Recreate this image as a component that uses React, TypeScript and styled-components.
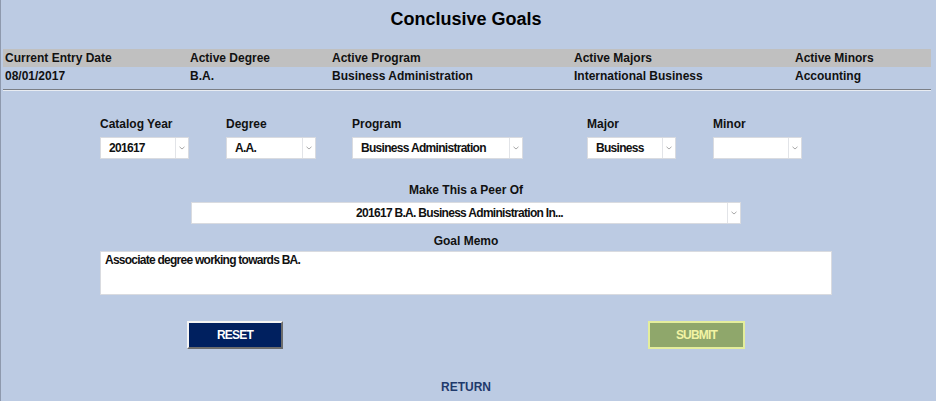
import React from "react";
import styled, { createGlobalStyle } from "styled-components";

const GlobalStyle = createGlobalStyle`
  html, body {
    margin: 0;
    padding: 0;
    background: #bccbe3;
  }
`;

interface SelectProps {
  value?: string;
  width: number;
  centered?: boolean;
}

const Select = ({ value, width, centered }: SelectProps) => (
  <SelectBox $width={width}>
    <SelectValue $centered={centered}>{value}</SelectValue>
    <ArrowCell>
      <svg width="6" height="4" viewBox="0 0 6 4">
        <path d="M0.5 0.8 L3 3 L5.5 0.8" fill="none" stroke="#a8a8a8" strokeWidth="1" />
      </svg>
    </ArrowCell>
  </SelectBox>
);

const fields = [
  { label: "Catalog Year", value: "201617", width: 89 },
  { label: "Degree", value: "A.A.", width: 90 },
  { label: "Program", value: "Business Administration", width: 171 },
  { label: "Major", value: "Business", width: 89 },
  { label: "Minor", value: "", width: 89 },
];

const info = [
  ["Current Entry Date", "08/01/2017"],
  ["Active Degree", "B.A."],
  ["Active Program", "Business Administration"],
  ["Active Majors", "International Business"],
  ["Active Minors", "Accounting"],
];

const App = () => {
  return (
    <>
      <GlobalStyle />
      <Page>
        <Title>Conclusive Goals</Title>
        <InfoTable>
          {info.map(([h]) => (
            <HeadCell key={h}>{h}</HeadCell>
          ))}
          {info.map(([h, v]) => (
            <ValueCell key={h + v}>{v}</ValueCell>
          ))}
        </InfoTable>
        <Rule />
        <FieldRow>
          {fields.map((f) => (
            <Field key={f.label}>
              <FieldLabel>{f.label}</FieldLabel>
              <Select value={f.value} width={f.width} />
            </Field>
          ))}
        </FieldRow>
        <CenterLabel $top={24}>Make This a Peer Of</CenterLabel>
        <PeerWrap>
          <Select value="201617 B.A. Business Administration In..." width={550} centered />
        </PeerWrap>
        <CenterLabel $top={10}>Goal Memo</CenterLabel>
        <Memo>Associate degree working towards BA.</Memo>
        <ButtonRow>
          <ResetButton>RESET</ResetButton>
          <SubmitButton>SUBMIT</SubmitButton>
        </ButtonRow>
        <ReturnLink>RETURN</ReturnLink>
      </Page>
    </>
  );
};

export default App;

const Page = styled.div`
  width: 936px;
  height: 401px;
  box-sizing: border-box;
  border-left: 1px solid #8e99ad;
  padding-right: 5px;
  background: #bccbe3;
  font-family: "Liberation Sans", Arial, sans-serif;
  font-size: 12px;
  font-weight: bold;
  color: #111;
  display: flex;
  flex-direction: column;
  overflow: hidden;
`;

const Title = styled.h1`
  margin: 0;
  height: 49px;
  box-sizing: border-box;
  padding-top: 8px;
  font-size: 18px;
  line-height: 22px;
  text-align: center;
  color: #000;
`;

const InfoTable = styled.div`
  margin-left: 2px;
  display: grid;
  grid-template-columns: 185px 142px 242px 221px 1fr;
`;

const HeadCell = styled.div`
  background: #c0c0c0;
  height: 18px;
  line-height: 18px;
  padding-left: 2px;
  white-space: nowrap;
`;

const ValueCell = styled.div`
  height: 18px;
  line-height: 19px;
  padding-left: 2px;
  white-space: nowrap;
`;

const Rule = styled.div`
  margin: 4px 0 0 2px;
  border-top: 1px solid #7b7f86;
  border-bottom: 1px solid #e8ecf2;
`;

const FieldRow = styled.div`
  margin-top: 26px;
  padding-left: 99px;
  display: grid;
  grid-template-columns: 126px 126px 235px 126px auto;
`;

const Field = styled.div`
  display: flex;
  flex-direction: column;
  gap: 5px;
`;

const FieldLabel = styled.div`
  line-height: 15px;
`;

const SelectBox = styled.div<{ $width: number }>`
  width: ${(p) => p.$width}px;
  height: 22px;
  box-sizing: border-box;
  display: flex;
  background: #fff;
  border: 1px solid #d9dbe0;
`;

const SelectValue = styled.div<{ $centered?: boolean }>`
  flex: 1;
  padding-left: ${(p) => (p.$centered ? 0 : 8)}px;
  text-align: ${(p) => (p.$centered ? "center" : "left")};
  line-height: 20px;
  letter-spacing: -0.7px;
  white-space: nowrap;
  overflow: hidden;
`;

const ArrowCell = styled.div`
  width: 12px;
  border-left: 1px solid #e2e4e8;
  display: flex;
  align-items: center;
  justify-content: center;
`;

const CenterLabel = styled.div<{ $top: number }>`
  margin-top: ${(p) => p.$top}px;
  line-height: 15px;
  text-align: center;
`;

const PeerWrap = styled.div`
  margin: 4px 0 0 190px;
`;

const Memo = styled.div`
  margin: 2px 0 0 99px;
  width: 732px;
  height: 44px;
  box-sizing: border-box;
  background: #fff;
  border: 1px solid #d9dbe0;
  padding: 1px 4px;
  line-height: 14px;
  letter-spacing: -0.75px;
`;

const ButtonRow = styled.div`
  margin-top: 26px;
  padding-left: 186px;
  display: flex;
  gap: 365px;
`;

const BaseButton = styled.button`
  width: 96px;
  height: 28px;
  box-sizing: border-box;
  font-family: "Liberation Sans", Arial, sans-serif;
  font-size: 12px;
  font-weight: bold;
  letter-spacing: -0.8px;
  padding: 0;
  cursor: pointer;
`;

const ResetButton = styled(BaseButton)`
  background: #00205f;
  color: #fff;
  border: 2px solid;
  border-color: #f4f4f4 #6c6c6c #6c6c6c #f4f4f4;
`;

const SubmitButton = styled(BaseButton)`
  width: 97px;
  background: #8fa76b;
  color: #f2f4a4;
  border: 2px solid #e4ee9c;
`;

const ReturnLink = styled.div`
  margin-top: 31px;
  line-height: 15px;
  text-align: center;
  color: #1f3a6c;
  cursor: pointer;
`;
